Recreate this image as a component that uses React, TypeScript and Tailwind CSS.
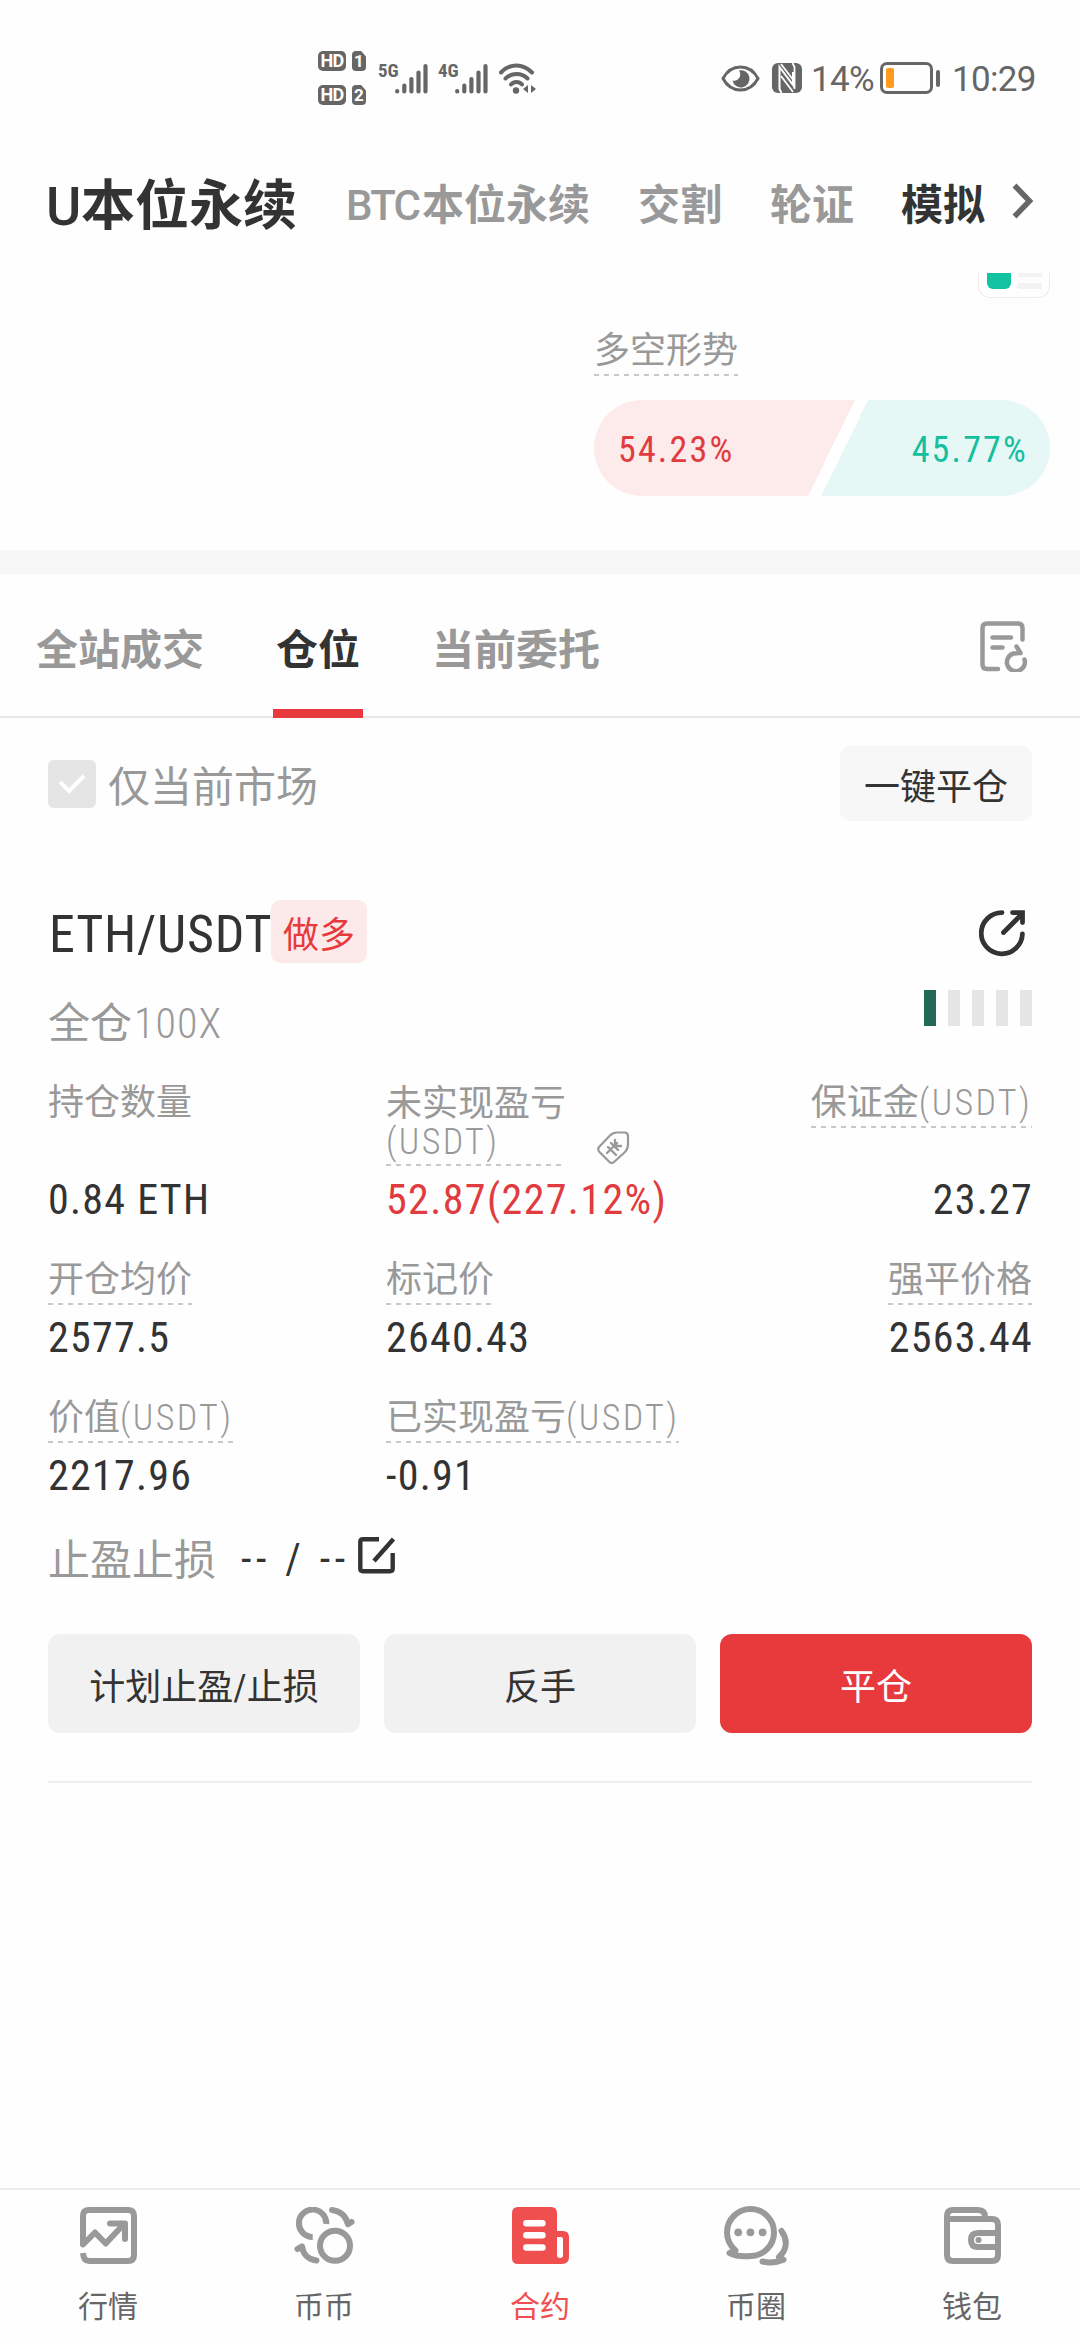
import type { ReactNode } from 'react';
import clsx from 'clsx';

/* ---------- small helpers ---------- */

// Latin letters and digits use a condensed face with open spacing
const Num = ({ children, className }: { children: ReactNode; className?: string }) => (
  <span className={clsx("font-['Roboto_Condensed','Roboto',sans-serif]", className)}>{children}</span>
);

const Dashes = () => (
  <div className="h-[2px] w-full bg-[repeating-linear-gradient(90deg,#c8c8c8_0_5px,transparent_5px_10px)]" />
);

const Label = ({ children, plain }: { children: ReactNode; plain?: boolean }) => (
  <div className="inline-flex flex-col text-4xl text-[#999]">
    <div className="h-12 whitespace-nowrap leading-[51px]">{children}</div>
    {plain ? <div className="h-[2px]" /> : <Dashes />}
  </div>
);

/* ---------- status bar ---------- */

const HdBadge = ({ sim }: { sim: string }) => (
  <div className="flex gap-[6px]">
    <span className="flex h-5 w-7 items-center justify-center rounded-[5px] bg-[#666] text-[18px] font-bold leading-none tracking-[-0.04em] text-white">
      HD
    </span>
    <span className="flex h-5 w-[14px] items-center justify-center rounded-[4px] bg-[#666] text-[17px] font-bold leading-none text-white [clip-path:polygon(0_0,65%_0,100%_28%,100%_100%,0_100%)]">
      {sim}
    </span>
  </div>
);

const Signal = ({ type }: { type: string }) => (
  <div className="flex items-start">
    <Num className="-mt-px w-[17px] text-[19px] font-bold leading-[18px] text-[#666]">{type}</Num>
    <svg width="33" height="31" viewBox="0 0 33 31" stroke="#666" strokeWidth="4.2" strokeLinecap="round">
      <path d="M2.2 28v.4M9.3 22.5v6M16.4 16v12.5M23.5 9.5v19M30.5 3v25.5" />
    </svg>
  </div>
);

const WifiIcon = () => (
  <svg width="37" height="31" viewBox="0 0 37 31" fill="none" stroke="#666" strokeWidth="4" strokeLinecap="round">
    <path d="M2 9.5C11 0 24 0 33 9.5M6.5 15.5c6-6 16-6 22 0M12 21.5c3-3.5 8-3.5 11 0" />
    <circle cx="17" cy="27.5" r="3.2" fill="#666" stroke="none" />
    <path d="M24 26l5-4v8zM37 26l-5-4v8z" fill="#666" stroke="none" />
  </svg>
);

const EyeIcon = () => (
  <svg width="39" height="27" viewBox="0 0 39 27" fill="none">
    <path d="M2 13.5C6 6 12 2 19.5 2S33 6 37 13.5C33 21 27 25 19.5 25S6 21 2 13.5Z" stroke="#666" strokeWidth="3" />
    <path d="M18 5.5A8.6 8.6 0 1 1 11.5 15.5C17 17 21.5 11 18 5.5Z" fill="#666" />
  </svg>
);

const NfcIcon = () => (
  <svg width="30" height="30" viewBox="0 0 30 30" fill="none">
    <rect width="30" height="30" rx="6" fill="#666" />
    <path d="M9.5 30L7.5 26V4L21 22V9" stroke="#fff" strokeWidth="2" />
    <path d="M9 13L21 29M9 1L22 18M20.5 0L22.5 4V26" stroke="#fff" strokeWidth="1.8" />
  </svg>
);

const Battery = () => (
  <div className="flex items-center gap-[3px]">
    <div className="flex h-[32px] w-[53px] items-center rounded-[7px] border-[3px] border-[#666] pl-[3px]">
      <div className="h-5 w-2 rounded-[2px] bg-[#ff9a1e]" />
    </div>
    <div className="h-[17px] w-1 rounded-full bg-[#666]" />
  </div>
);

const StatusBar = () => (
  <div className="flex h-[156px] shrink-0 items-center pl-[318px] pr-[45px]">
    <div className="flex flex-col gap-[14px]">
      <HdBadge sim="1" />
      <HdBadge sim="2" />
    </div>
    <div className="ml-3">
      <Signal type="5G" />
    </div>
    <div className="ml-[10px]">
      <Signal type="4G" />
    </div>
    <div className="ml-[11px]">
      <WifiIcon />
    </div>
    <div className="ml-auto flex items-center text-[35px] leading-none text-[#666]">
      <EyeIcon />
      <div className="ml-3">
        <NfcIcon />
      </div>
      <span className="ml-[9px] w-[66px] whitespace-nowrap pt-[3px] tracking-[-0.02em]">14%</span>
      <div className="ml-[3px]">
        <Battery />
      </div>
      <span className="ml-3 w-[83px] whitespace-nowrap pt-[3px] tracking-[-0.02em]">10:29</span>
    </div>
  </div>
);

/* ---------- market header ---------- */

const Header = () => (
  <div className="mb-[19px] flex h-[98px] shrink-0 items-center whitespace-nowrap pl-12 text-[42px] font-bold text-[#999]">
    <span className="w-[298px] pt-[3px] text-[54px] text-[#333]">
      <span className="-ml-[2px] inline-block w-[35px] font-medium">U</span>本位永续
    </span>
    <span className="w-[292px] pt-px">
      <span className="inline-block w-[76px] font-medium tracking-[-0.04em]">BTC</span>本位永续
    </span>
    <span className="w-[132px] pt-px">交割</span>
    <span className="w-[131px] pt-px">轮证</span>
    <span className="pt-px text-[#333]">模拟</span>
    <svg className="mb-[9px] ml-[27px]" width="22" height="36" viewBox="0 0 22 36" fill="none" stroke="#666" strokeWidth="5.5">
      <path d="M2.5 2.5L17.5 18L2.5 33.5" />
    </svg>
  </div>
);

const LongShort = () => (
  <div className="flex h-[277px] shrink-0 flex-col items-end pr-[30px]">
    <div className="flex h-[25px] w-[72px] gap-[7px] rounded-b-xl border border-t-0 border-[#f3e9ea] pl-2">
      <div className="h-4 w-6 rounded-b-md bg-[#13c2a3]" />
      <div className="flex flex-col gap-[6px]">
        <div className="h-1 w-6 bg-[#f3f3f3]" />
        <div className="h-[6px] w-6 bg-[#f3f3f3]" />
      </div>
    </div>
    <div className="mt-7 w-[456px]">
      <Label>多空形势</Label>
      <div className="mt-[24px] flex h-24 items-center justify-between overflow-hidden rounded-full bg-[linear-gradient(116deg,#fdeaea_0_51.9%,#fff_51.9%_54.5%,#e6f8f5_54.5%)] pl-6 pr-[22px] pt-[3px] text-4xl tracking-[0.06em]">
        <Num className="text-[#e03c40]">54.23%</Num>
        <Num className="text-[#14bf9f]">45.77%</Num>
      </div>
    </div>
  </div>
);

/* ---------- position tabs ---------- */

const Tabs = () => (
  <div className="flex h-36 shrink-0 items-start border-b-2 border-[#e8e8e8] px-9 text-[42px] font-bold leading-[154px] text-[#999]">
    <span>全站成交</span>
    <div className="ml-[69px] flex w-[90px] flex-col items-center text-[#333]">
      <span className="h-[135px]">仓位</span>
      <div className="h-[9px] w-full bg-[#e83a3d]" />
    </div>
    <span className="ml-[69px]">当前委托</span>
    <svg
      className="ml-auto mr-[16px] mt-[47px]"
      width="48"
      height="51"
      viewBox="0 0 48 51"
      fill="none"
      stroke="#999"
      strokeWidth="4.5"
      strokeLinecap="round"
      strokeLinejoin="round"
    >
      <path d="M18 48H7q-4.5 0-4.5-4.5V7q0-4.5 4.5-4.5h31q4.5 0 4.5 4.5v11.5M12.5 16.5h18.5M12.5 26.5h10" />
      <path d="M36.5 25.5l4 6.5l-7 .5A9 9 0 1 0 44.5 38.5" />
    </svg>
  </div>
);

const FilterRow = () => (
  <div className="flex h-[75px] shrink-0 items-center justify-between px-12">
    <div className="flex items-center gap-3">
      <div className="flex h-12 w-12 items-center justify-center rounded-md bg-[#e5e5e5]">
        <svg width="28" height="22" viewBox="0 0 28 22" fill="none" stroke="#fff" strokeWidth="4">
          <path d="M2 9l9 9L26 3" />
        </svg>
      </div>
      <span className="mt-[9px] text-[42px] leading-[48px] text-[#999]">仅当前市场</span>
    </div>
    <button className="h-[75px] w-48 rounded-[10px] bg-[#f7f7f7] pt-[8px] text-4xl text-[#333]">一键平仓</button>
  </div>
);

/* ---------- position card ---------- */

const ShareIcon = () => (
  <svg width="46" height="47" viewBox="0 0 46 47" fill="none" stroke="#333" strokeWidth="4.8" strokeLinecap="round">
    <path d="M23 2.6A20.6 20.6 0 1 0 43.4 24M24.5 22.5L42 5" />
    <path d="M33.5 2.6h10v10" strokeLinejoin="miter" />
  </svg>
);

const TagIcon = () => (
  <svg width="33" height="33" viewBox="0 0 33 33" fill="none" stroke="#999" strokeWidth="2.2" strokeLinecap="round">
    <path
      d="M2 16L13 4.5Q16 1.5 20 1.5L28 1.5Q31 2 31 5V13Q31 18 28 21L17 31Q14.5 33 12.5 31L2 20.5Q0.5 18 2 16Z"
      strokeLinejoin="round"
    />
    <path d="M10 22l10-10M11 16l8 8M14 12l7 7M18 9v6h6" strokeWidth="2.4" />
  </svg>
);

const EditIcon = () => (
  <svg width="38" height="37" viewBox="0 0 38 37" fill="none" stroke="#333" strokeWidth="4.4" strokeLinejoin="round">
    <path d="M21 2.3H5q-2.7 0-2.7 2.7v26.5q0 2.7 2.7 2.7h27q2.7 0 2.7-2.7V16" />
    <path d="M16 24L35.5 2" />
  </svg>
);

const RISK_LEVELS = 5;

const RiskMeter = ({ level }: { level: number }) => (
  <div className="flex gap-3">
    {Array.from({ length: RISK_LEVELS }, (_, i) => (
      <div key={i} className={clsx('h-9 w-3', i < level ? 'bg-[#236a56]' : 'bg-[#e5e5e5]')} />
    ))}
  </div>
);

interface CellProps {
  label: ReactNode;
  value: string;
  plain?: boolean;
  right?: boolean;
}

const Cell = ({ label, value, plain, right }: CellProps) => (
  <div className={clsx('flex flex-col justify-between', right ? 'items-end' : 'items-start')}>
    <Label plain={plain}>{label}</Label>
    <Num className={clsx('h-[50px] text-[42px] leading-[51px] tracking-[0.03em] text-[#333]', right && '-mr-px')}>
      {value}
    </Num>
  </div>
);

const usdt = <Num className="font-light tracking-[0.065em]">(USDT)</Num>;

const Position = () => (
  <div className="mx-12 flex h-[883px] shrink-0 flex-col border-b-2 border-[#efefef]">
    <div className="flex h-[63px] items-center justify-between">
      <div className="flex items-center">
        <Num className="w-[223px] whitespace-nowrap pl-px pt-[7px] text-[52px] tracking-[0.015em] text-[#333]">ETH/USDT</Num>
        <span className="h-[63px] w-24 rounded-[9px] bg-[#fceaea] pt-1 text-center text-4xl leading-[64px] text-[#e83a3d]">
          做多
        </span>
      </div>
      <div className="mr-[7px] mt-[3px]">
        <ShareIcon />
      </div>
    </div>

    <div className="mt-[27px] flex h-[66px] items-start justify-between">
      <span className="text-[42px] leading-[68px] text-[#999]">
        全仓<Num className="pl-[2px] font-light tracking-[0.025em]">100X</Num>
      </span>
      <RiskMeter level={1} />
    </div>

    <div className="mt-[22px] grid grid-cols-[338px_1fr_auto] grid-rows-[146px_107px_107px] gap-y-[31px]">
      <Cell label="持仓数量" value="0.84 ETH" plain />
      <div className="flex flex-col justify-between">
        <div className="flex items-end text-4xl leading-[38px] text-[#999]">
          <div className="w-[177px] whitespace-nowrap pt-[7px]">
            未实现盈亏
            <br />
            {usdt}
            <div className="h-[3px]" />
            <Dashes />
          </div>
          <div className="mb-[2px] ml-[34px]">
            <TagIcon />
          </div>
        </div>
        <Num className="h-[50px] text-[42px] leading-[51px] tracking-[0.033em] text-[#e03c40]">52.87(227.12%)</Num>
      </div>
      <Cell label={<>保证金{usdt}</>} value="23.27" right />

      <Cell label="开仓均价" value="2577.5" />
      <Cell label="标记价" value="2640.43" />
      <Cell label="强平价格" value="2563.44" right />

      <Cell label={<>价值{usdt}</>} value="2217.96" />
      <Cell label={<>已实现盈亏{usdt}</>} value="-0.91" />
    </div>

    <div className="mt-[33px] flex h-[50px] items-center text-[42px] leading-[50px] text-[#333]">
      <span className="w-[193px] pt-[6px] text-[#999]">止盈止损</span>
      <Num className="w-[117px] whitespace-nowrap pt-[2px] tracking-[0.11em]">-- / --</Num>
      <div className="mb-[6px]">
        <EditIcon />
      </div>
    </div>

    <div className="mt-[51px] grid grid-cols-3 gap-6 text-4xl text-[#333]">
      <button className="h-[99px] rounded-xl bg-[#f1f1f1] pt-[9px]">
        计划止盈<Num>/</Num>止损
      </button>
      <button className="h-[99px] rounded-xl bg-[#f1f1f1] pt-[9px]">反手</button>
      <button className="h-[99px] rounded-xl bg-[#e83a3d] pt-[9px] text-white">平仓</button>
    </div>
  </div>
);

/* ---------- bottom navigation ---------- */

const ChartIcon = () => (
  <svg width="57" height="57" viewBox="0 0 57 57" fill="none" stroke="currentColor" strokeWidth="6" strokeLinejoin="round">
    <path d="M3 46Q3.5 54 9 54H48Q54 54 54 48V9Q54 3 48 3H9Q3 3 3 9V37.5L15 25.5L25.7 36.5L44 17" />
    <path d="M30 16.5H45V32" strokeLinecap="round" />
  </svg>
);

const CoinsIcon = () => (
  <svg width="61" height="57" viewBox="0 0 61 57" fill="none" stroke="currentColor" strokeWidth="6" strokeLinejoin="round">
    <circle cx="41" cy="38.7" r="15" />
    <path d="M32.3 17A13.7 13.7 0 1 0 18.7 30" />
    <path d="M38 3C46.5 4 52 9.5 54 17.3L57.5 15M3.5 42L8 39.3C9 47 14 52.5 22.5 53.5" strokeLinecap="round" />
  </svg>
);

const ContractIcon = () => (
  <svg width="57" height="57" viewBox="0 0 57 57" fill="none">
    <path d="M6 0H39Q45 0 45 6V24H51Q57 24 57 30V50Q57 57 50 57H6Q0 57 0 51V6Q0 0 6 0Z" fill="currentColor" />
    <path d="M14.3 16.3H30.5M14.3 28.3H30.5M14.3 40.5H30.5" stroke="#fff" strokeWidth="6.4" strokeLinecap="round" />
    <path d="M45 30H49Q51 30 51 32V48Q51 51 48 51T45 48Z" fill="#fff" />
  </svg>
);

const ChatIcon = () => (
  <svg width="67" height="61" viewBox="0 0 67 61" fill="none" stroke="currentColor" strokeWidth="6" strokeLinecap="round" strokeLinejoin="round">
    <path d="M6.5 48L12.5 45.5Q4 38 4 27.3A23.5 23.5 0 1 1 27.4 51Q14 52 6.5 48Z" />
    <path d="M58.5 26C65 35 64 45 56 52L60.5 54.7Q50 59 39.5 56.5" />
    <g fill="currentColor" stroke="none">
      <circle cx="15.2" cy="27.3" r="3.9" />
      <circle cx="27.4" cy="27.3" r="3.9" />
      <circle cx="39.6" cy="27.3" r="3.9" />
    </g>
  </svg>
);

const WalletIcon = () => (
  <svg width="57" height="57" viewBox="0 0 57 57" fill="none" stroke="currentColor" strokeWidth="6">
    <path d="M3 12V48Q3 54 9 54H48Q54 54 54 48V18Q54 12 48 12H3V9Q3 3 9 3H34Q41 3 41 10" />
    <path d="M54 26H34Q27 26 27 33T34 40H54" />
    <circle cx="34.5" cy="33" r="3" fill="currentColor" stroke="none" />
  </svg>
);

const navItems = [
  { label: '行情', icon: <ChartIcon /> },
  { label: '币币', icon: <CoinsIcon /> },
  { label: '合约', icon: <ContractIcon />, active: true },
  { label: '币圈', icon: <ChatIcon /> },
  { label: '钱包', icon: <WalletIcon /> },
];

const BottomNav = () => (
  <div className="mt-auto grid h-[152px] shrink-0 grid-cols-5 border-t-2 border-[#ececec]">
    {navItems.map((item) => (
      <div key={item.label} className={clsx('flex flex-col items-center pt-[15px]', item.active ? 'text-[#f04f50]' : 'text-[#999]')}>
        <div className="flex h-[61px] items-center">{item.icon}</div>
        <span className={clsx('mt-[21px] text-3xl leading-[40px]', !item.active && 'text-[#666]')}>{item.label}</span>
      </div>
    ))}
  </div>
);

export default function App() {
  return (
    <div className="flex h-[2340px] w-[1080px] flex-col overflow-hidden bg-[#fefefe] font-['Roboto','Noto_Sans_CJK_SC',sans-serif]">
      <StatusBar />
      <Header />
      <LongShort />
      <div className="h-6 shrink-0 bg-[#f7f7f7]" />
      <Tabs />
      <div className="h-7 shrink-0" />
      <FilterRow />
      <div className="h-[79px] shrink-0" />
      <Position />
      <BottomNav />
    </div>
  );
}
